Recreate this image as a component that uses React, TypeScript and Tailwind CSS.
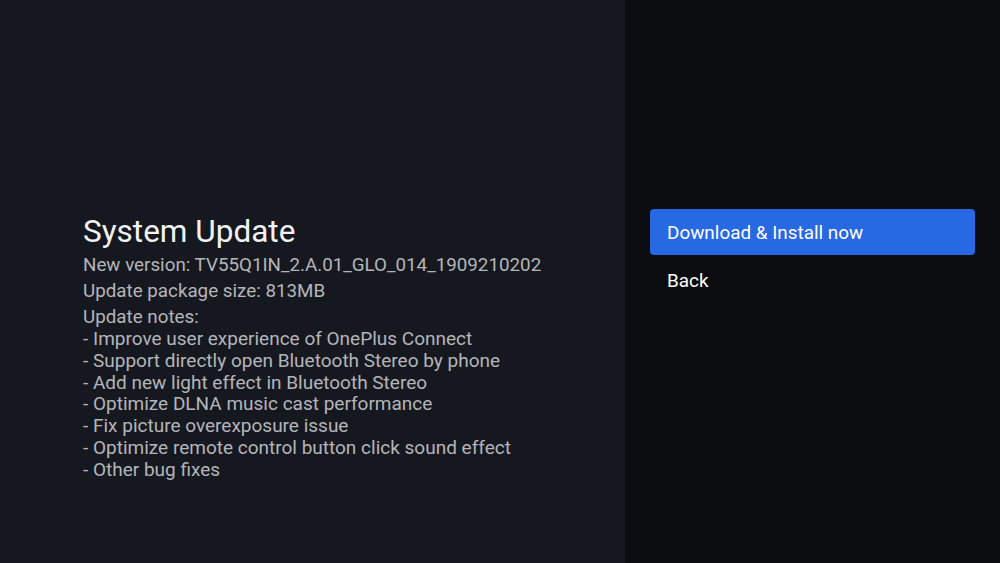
import React from 'react';

const notes = [
  '- Improve user experience of OnePlus Connect',
  '- Support directly open Bluetooth Stereo by phone',
  '- Add new light effect in Bluetooth Stereo',
  '- Optimize DLNA music cast performance',
  '- Fix picture overexposure issue',
  '- Optimize remote control button click sound effect',
  '- Other bug fixes',
];

export default function App() {
  return (
    <div
      className="flex h-[563px] w-[1000px] overflow-hidden"
      style={{ fontFamily: 'Roboto, "Noto Sans", sans-serif' }}
    >
      {/* Update info */}
      <div className="w-[625px] bg-[#16181f] pl-[83px] pt-[214px]">
        <h1 className="text-[31.5px] leading-[36px] text-[#f2f2f4]">System Update</h1>
        <div className="mt-[2px] text-[18.8px] leading-[26px] text-[#b4b5ba]">
          <p>New version: TV55Q1IN_2.A.01_GLO_014_1909210202</p>
          <p>Update package size: 813MB</p>
          <p>Update notes:</p>
        </div>
        <ul className="-mt-[2px] text-[19px] leading-[21.8px] text-[#b4b5ba]">
          {notes.map((n) => (
            <li key={n}>{n}</li>
          ))}
        </ul>
      </div>

      {/* Actions */}
      <div className="flex-1 bg-[#0b0c10] pl-[25px] pr-[25px] pt-[209px]">
        <button className="flex h-[46px] w-full items-center rounded-[4px] bg-[#2768e3] px-[17px] pt-[2px] text-left text-[18.9px] text-white">
          Download &amp; Install now
        </button>
        <button className="mt-[2px] flex h-[46px] w-full items-center px-[17px] pt-[2px] text-left text-[18.9px] text-white">
          Back
        </button>
      </div>
    </div>
  );
}
